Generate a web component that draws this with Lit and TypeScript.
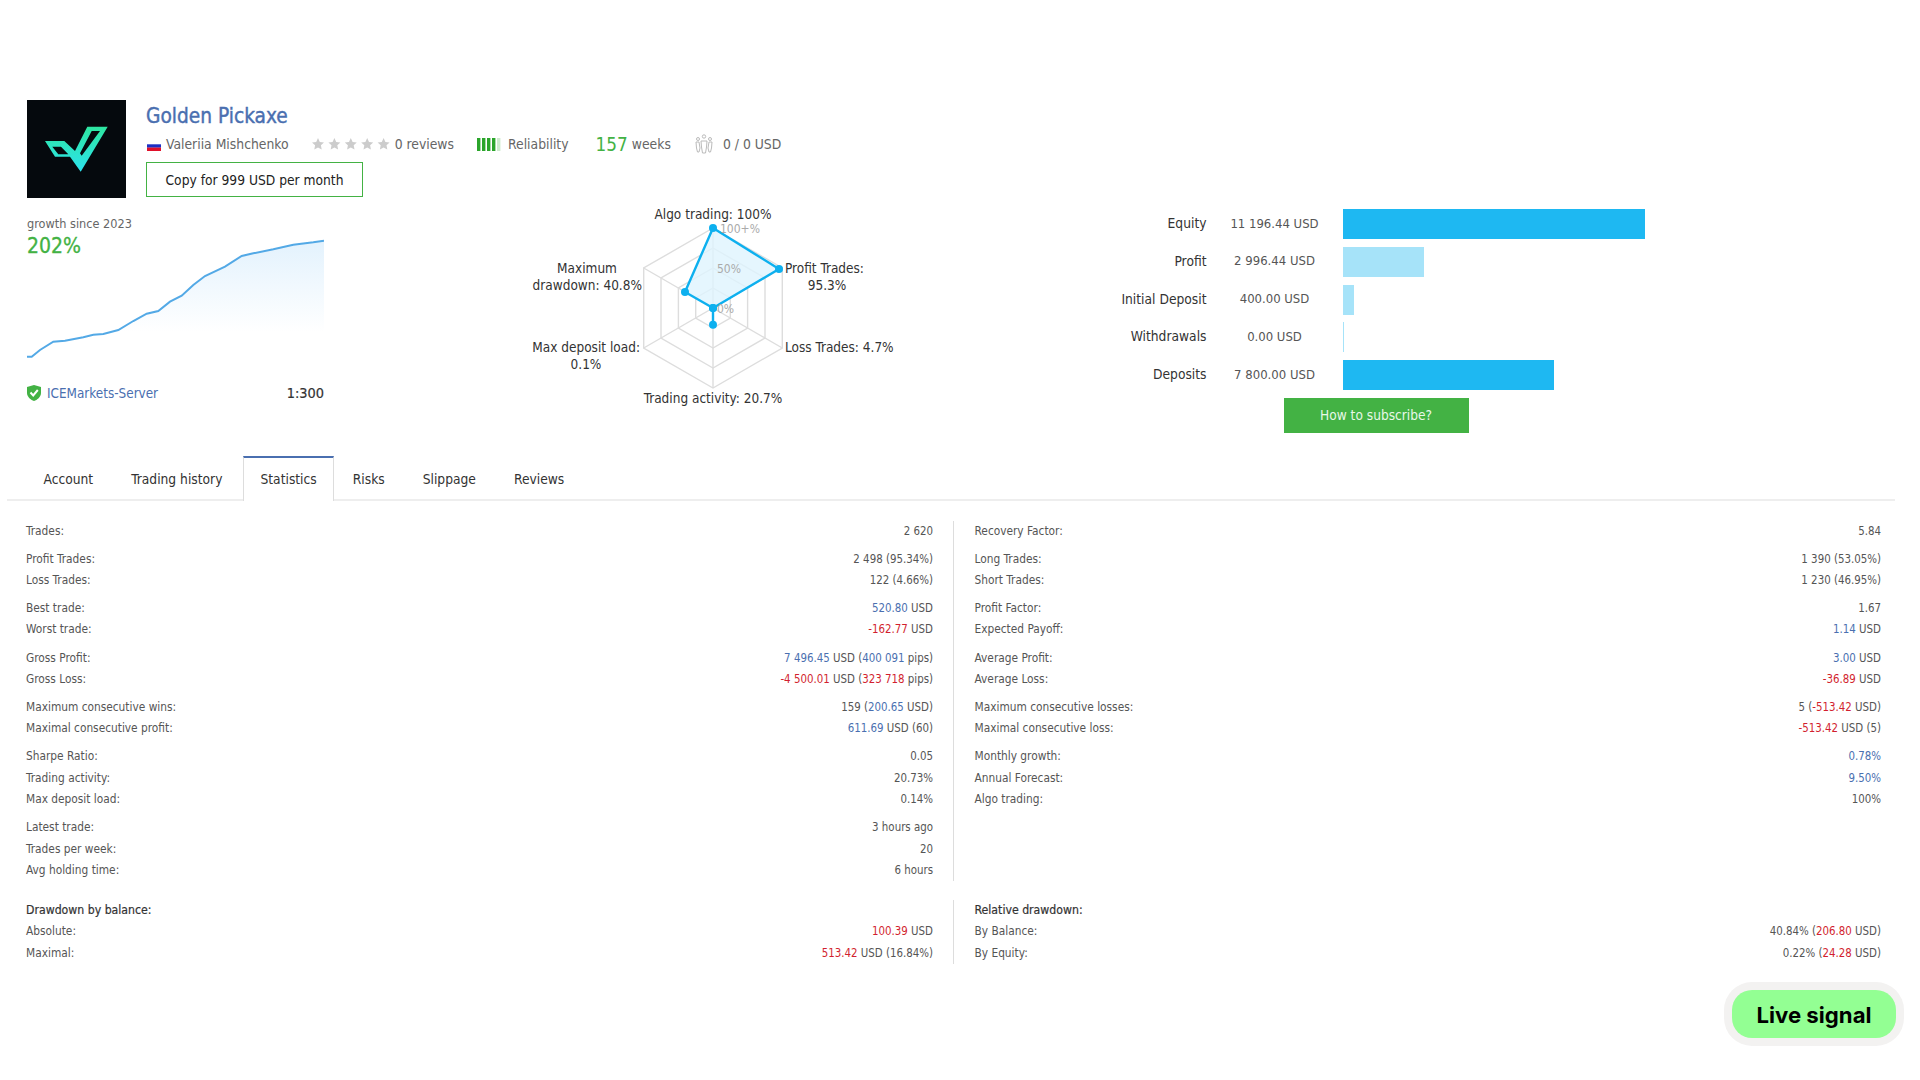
import { LitElement, html, css, svg } from 'lit';
import { customElement } from 'lit/decorators.js';

// [label, value html] rows, grouped the way the stats table spaces them
type Row = [string, unknown];
const blue = (s: string) => html`<span class="blue">${s}</span>`;
const red = (s: string) => html`<span class="red">${s}</span>`;

const leftGroups: Row[][] = [
  [['Trades:', '2 620']],
  [['Profit Trades:', '2 498 (95.34%)'], ['Loss Trades:', '122 (4.66%)']],
  [['Best trade:', html`${blue('520.80')} USD`], ['Worst trade:', html`${red('-162.77')} USD`]],
  [
    ['Gross Profit:', html`${blue('7 496.45')} USD (${blue('400 091')} pips)`],
    ['Gross Loss:', html`${red('-4 500.01')} USD (${red('323 718')} pips)`],
  ],
  [
    ['Maximum consecutive wins:', html`159 (${blue('200.65')} USD)`],
    ['Maximal consecutive profit:', html`${blue('611.69')} USD (60)`],
  ],
  [['Sharpe Ratio:', '0.05'], ['Trading activity:', '20.73%'], ['Max deposit load:', '0.14%']],
  [['Latest trade:', '3 hours ago'], ['Trades per week:', '20'], ['Avg holding time:', '6 hours']],
];

const rightGroups: Row[][] = [
  [['Recovery Factor:', '5.84']],
  [['Long Trades:', '1 390 (53.05%)'], ['Short Trades:', '1 230 (46.95%)']],
  [['Profit Factor:', '1.67'], ['Expected Payoff:', html`${blue('1.14')} USD`]],
  [['Average Profit:', html`${blue('3.00')} USD`], ['Average Loss:', html`${red('-36.89')} USD`]],
  [
    ['Maximum consecutive losses:', html`5 (${red('-513.42')} USD)`],
    ['Maximal consecutive loss:', html`${red('-513.42')} USD (5)`],
  ],
  [['Monthly growth:', blue('0.78%')], ['Annual Forecast:', blue('9.50%')], ['Algo trading:', '100%']],
];

const drawLeft: Row[] = [
  ['Absolute:', html`${red('100.39')} USD`],
  ['Maximal:', html`${red('513.42')} USD (16.84%)`],
];
const drawRight: Row[] = [
  ['By Balance:', html`40.84% (${red('206.80')} USD)`],
  ['By Equity:', html`0.22% (${red('24.28')} USD)`],
];

const funds = [
  { label: 'Equity', value: '11 196.44 USD', width: 302, light: false },
  { label: 'Profit', value: '2 996.44 USD', width: 81, light: true },
  { label: 'Initial Deposit', value: '400.00 USD', width: 11, light: true },
  { label: 'Withdrawals', value: '0.00 USD', width: 1, light: true },
  { label: 'Deposits', value: '7 800.00 USD', width: 211, light: false },
];

const tabs = ['Account', 'Trading history', 'Statistics', 'Risks', 'Slippage', 'Reviews'];

// radar chart, drawn around 0,0
const R = [20, 40, 60, 80];
const hex = (r: number) =>
  [0, 60, 120, 180, 240, 300]
    .map((a) => {
      const t = (a * Math.PI) / 180;
      return `${(r * Math.sin(t)).toFixed(1)},${(-r * Math.cos(t)).toFixed(1)}`;
    })
    .join(' ');
const dots = [
  [0, -80],
  [66, -39],
  [0, 0],
  [0, 16.7],
  [0, 0],
  [-28, -16],
];

const growthLine =
  '0,120.7 4.7,120.7 13,114 26.3,105.7 38,104.7 56.3,101.3 66.3,98.7 76.3,98 91.3,94 106.3,85 119.7,77.7 131.3,75 143,65.7 154.7,59.7 166.3,49 178,40 198,30.7 214.7,20 226.3,17.3 246.3,13.3 266.3,8.7 286.3,6.3 297,4.7';

@customElement('app-root')
export class AppRoot extends LitElement {
  static styles = css`
    :host {
      display: block;
      position: relative;
      width: 1920px;
      height: 1080px;
      background: #fff;
      overflow: hidden;
      font-family: 'DejaVu Sans Condensed', 'DejaVu Sans', sans-serif;
      font-size: 11.8px;
      color: #555;
    }
    .head {
      display: flex;
      gap: 20px;
      padding: 100px 0 0 27px;
    }
    .logo {
      display: block;
      width: 99px;
      height: 98px;
    }
    .title {
      margin-top: 4px;
      font-size: 20.7px;
      line-height: 24px;
      color: #4a6fb0;
      -webkit-text-stroke: 0.4px #4a6fb0;
    }
    .meta {
      display: flex;
      align-items: center;
      height: 20px;
      margin-top: 6px;
      font-size: 13.8px;
      color: #666;
    }
    .flag {
      display: block;
      width: 14px;
      height: 10px;
      margin: 3px 5px 0 1px;
    }
    .stars {
      display: block;
      margin: 0 5px 0 23px;
    }
    .rel {
      display: block;
      margin: 0 7px 0 23px;
    }
    .weeks {
      display: flex;
      align-items: center;
      margin-left: 27px;
    }
    .weeks b {
      font-weight: normal;
      font-size: 18.8px;
      color: #43b244;
      margin-right: 4px;
    }
    .people {
      display: block;
      margin: 0 9px 0 23px;
    }
    .copy {
      display: flex;
      align-items: center;
      justify-content: center;
      width: 217px;
      height: 35px;
      box-sizing: border-box;
      margin-top: 8px;
      border: 1px solid #43b244;
      font-size: 13.7px;
      color: #222;
    }
    .summary {
      display: flex;
      height: 225px;
      margin-top: 9px;
    }
    .growth {
      width: 297px;
      margin-left: 27px;
      flex: none;
    }
    .since {
      margin-top: 10px;
      font-size: 12.6px;
      line-height: 14px;
      color: #666;
    }
    .pct {
      margin-top: 3px;
      font-size: 21px;
      line-height: 24px;
      color: #43b244;
      -webkit-text-stroke: 0.3px #43b244;
    }
    .curve {
      display: block;
      margin-top: -22px;
    }
    .server {
      display: flex;
      align-items: center;
      margin-top: 24px;
      font-size: 13.4px;
      color: #4a6fb0;
    }
    .server svg {
      display: block;
      margin-right: 6px;
    }
    .server span {
      margin-left: auto;
      font-size: 14.4px;
      color: #333;
      -webkit-text-stroke: 0.2px #333;
    }
    .radar {
      display: block;
      flex: none;
      margin-left: 196px;
    }
    .radar text {
      font-size: 13.5px;
      fill: #333;
    }
    .radar .scale {
      font-size: 12px;
      fill: #aaa;
    }
    .funds {
      flex: none;
      margin-left: 179.5px;
      padding-top: 2px;
    }
    .fund {
      display: grid;
      grid-template-columns: 107px 136px 302px;
      align-items: center;
      height: 30px;
      margin-bottom: 7.75px;
      font-size: 13px;
    }
    .fund .name {
      text-align: right;
      margin-top: -2px;
      font-size: 13.7px;
      color: #333;
    }
    .fund .val {
      text-align: center;
      margin-top: -2px;
    }
    .bar {
      height: 30px;
      background: #1eb8f2;
    }
    .bar.light {
      background: #a6e3f9;
    }
    .how {
      display: flex;
      align-items: center;
      justify-content: center;
      width: 185px;
      height: 35px;
      margin: 0 0 0 184px;
      background: #43b244;
      color: #e8f8e8;
      font-size: 13.6px;
    }
    .tabs {
      display: flex;
      height: 43px;
      margin: 24px 25px 0 7px;
      padding-left: 17.5px;
      border-bottom: 2px solid #eee;
    }
    .tab {
      display: flex;
      align-items: center;
      padding: 0 19px;
      height: 43px;
      font-size: 13.7px;
      color: #333;
      border-top: 2px solid transparent;
      box-sizing: border-box;
    }
    .tab.on {
      height: 45px;
      margin-left: 2px;
      border-top: 2px solid #4a6fb0;
      border-left: 1px solid #ddd;
      border-right: 1px solid #ddd;
      background: #fff;
      padding: 0 16px 2px;
    }
    .cols {
      display: grid;
      grid-template-columns: 927px 928px;
      padding-left: 26px;
      margin-top: 19.5px;
    }
    .col + .col {
      padding-left: 20.5px;
      border-left: 1px solid #ddd;
      box-sizing: border-box;
    }
    .cols.low {
      margin-top: 18.5px;
    }
    .group {
      margin-bottom: 6.7px;
    }
    .group:last-child {
      margin-bottom: 0;
    }
    .row {
      display: flex;
      justify-content: space-between;
      height: 21.4px;
      line-height: 21.4px;
      padding-right: 20px;
    }
    .row .v {
      font-size: 11.4px;
    }
    .col + .col .row {
      padding-right: 0;
    }
    .caption {
      height: 21.4px;
      line-height: 21.4px;
      font-size: 12.2px;
      color: #333;
      -webkit-text-stroke: 0.2px #333;
    }
    .blue {
      color: #4a6fb0;
    }
    .red {
      color: #d21f2f;
    }
    .live {
      position: absolute;
      left: 1724px;
      top: 982px;
      width: 180px;
      height: 64px;
      box-sizing: border-box;
      padding: 8px;
      border-radius: 28px;
      background: #f3f2f1;
    }
    .live div {
      display: flex;
      align-items: center;
      justify-content: center;
      height: 48px;
      border-radius: 20px;
      background: #93ff93;
      font: 700 22.2px Inter, sans-serif;
      color: #000;
    }
  `;

  renderRows(rows: Row[]) {
    return rows.map(([k, v]) => html`<div class="row"><span>${k}</span><span class="v">${v}</span></div>`);
  }

  renderLogo() {
    return html`<svg class="logo" viewBox="0 0 99 98">
      <defs>
        <linearGradient id="lg" x1="0" y1="0" x2="0" y2="1">
          <stop offset="0" stop-color="#2ee6a0"></stop>
          <stop offset="1" stop-color="#2ce2ee"></stop>
        </linearGradient>
      </defs>
      <rect width="99" height="98" fill="#05090d"></rect>
      <path
        fill="url(#lg)"
        fill-rule="evenodd"
        d="M18 41H37.3L48 51 60.3 26.7H80.7L53.7 71.7 43 56.7H28ZM25.3 46.7L31.3 54.3H41.3L34 46.7ZM64.7 31L53 53.3 54.7 55.7 73 31Z"
      ></path>
    </svg>`;
  }

  renderStars() {
    const star = 'M6 0L7.8 3.9 12 4.4 8.9 7.3 9.7 11.5 6 9.4 2.3 11.5 3.1 7.3 0 4.4 4.2 3.9Z';
    return html`<svg class="stars" width="78" height="12" viewBox="0 0 78 12">
      ${[0, 1, 2, 3, 4].map(
        (i) => svg`<path d=${star} transform="translate(${i * 16.4} 0)" fill="#ccc"></path>`
      )}
    </svg>`;
  }

  renderReliability() {
    return html`<svg class="rel" width="24" height="13" viewBox="0 0 24 13">
      ${[0, 5, 10, 15].map((x) => svg`<rect x=${x} width="3.4" height="13" fill="#2ba52b"></rect>`)}
      <rect x="20" width="3.4" height="13" fill="#cdeacd"></rect>
    </svg>`;
  }

  renderPeople() {
    return html`<svg class="people" width="20" height="20" viewBox="0 0 20 20" fill="none" stroke="#bbb" stroke-width="1">
      <circle cx="10" cy="2.5" r="1.7"></circle>
      <circle cx="4" cy="5" r="1.5"></circle>
      <circle cx="16" cy="5" r="1.5"></circle>
      <path d="M7 7h6l-.5 6-1 6h-3l-1-6zM2 8h3l1 6-1 4H3.5L2.5 14zM18 8h-3l-1 6 1 4h1.5l1-4z"></path>
    </svg>`;
  }

  renderRadar() {
    return html`<svg class="radar" width="400" height="225" viewBox="0 0 400 225">
      <g transform="translate(193 101)">
        ${R.map((r) => svg`<polygon points=${hex(r)} fill="none" stroke="#ddd" stroke-width="1.4"></polygon>`)}
        ${[0, 60, 120].map((a) => {
          const t = (a * Math.PI) / 180;
          const x = 80 * Math.sin(t);
          const y = 80 * Math.cos(t);
          return svg`<line x1=${x} y1=${-y} x2=${-x} y2=${y} stroke="#ddd" stroke-width="1.4"></line>`;
        })}
        <polygon
          points=${dots.map((d) => d.join(',')).join(' ')}
          fill="#dff4fe"
          fill-opacity="0.8"
          stroke="#0db0ef"
          stroke-width="2.4"
          stroke-linejoin="round"
        ></polygon>
        ${dots.map(([x, y]) => svg`<circle cx=${x} cy=${y} r="4" fill="#0db0ef"></circle>`)}
        <text class="scale" x="7" y="-75">100+%</text>
        <text class="scale" x="4" y="-35">50%</text>
        <text class="scale" x="4" y="5">0%</text>
      </g>
      <text x="193" y="12" text-anchor="middle">Algo trading: 100%</text>
      <text x="265" y="66">Profit Trades:</text>
      <text x="307" y="83" text-anchor="middle">95.3%</text>
      <text x="67" y="66" text-anchor="middle">Maximum</text>
      <text x="122" y="83" text-anchor="end">drawdown: 40.8%</text>
      <text x="120" y="145" text-anchor="end">Max deposit load:</text>
      <text x="66" y="162" text-anchor="middle">0.1%</text>
      <text x="265" y="145">Loss Trades: 4.7%</text>
      <text x="193" y="196" text-anchor="middle">Trading activity: 20.7%</text>
    </svg>`;
  }

  render() {
    return html`
      <div class="head">
        ${this.renderLogo()}
        <div>
          <div class="title">Golden Pickaxe</div>
          <div class="meta">
            <svg class="flag" viewBox="0 0 14 10">
              <rect width="14" height="3.4" fill="#fff"></rect>
              <rect y="3.3" width="14" height="3.4" fill="#1c2fc4"></rect>
              <rect y="6.6" width="14" height="3.4" fill="#e0102a"></rect>
            </svg>
            Valeriia Mishchenko ${this.renderStars()} 0 reviews ${this.renderReliability()} Reliability
            <span class="weeks"><b>157</b>weeks</span>
            ${this.renderPeople()} 0 / 0 USD
          </div>
          <div class="copy">Copy for 999 USD per month</div>
        </div>
      </div>

      <div class="summary">
        <div class="growth">
          <div class="since">growth since 2023</div>
          <div class="pct">202%</div>
          <svg class="curve" width="297" height="125" viewBox="0 0 297 125">
            <defs>
              <linearGradient id="area" x1="0" y1="0" x2="0" y2="1">
                <stop offset="0" stop-color="#e3f2fd"></stop>
                <stop offset="0.78" stop-color="#fff"></stop>
              </linearGradient>
            </defs>
            <polygon points="${growthLine} 297,122 0,122" fill="url(#area)"></polygon>
            <polyline points=${growthLine} fill="none" stroke="#53a9e6" stroke-width="2"></polyline>
          </svg>
          <div class="server">
            <svg width="14" height="16" viewBox="0 0 14 16">
              <path d="M7 0L14 2V8C14 12 10 15 7 16 4 15 0 12 0 8V2Z" fill="#43b244"></path>
              <path d="M3.5 7.5L6.2 10.4 10.8 5" fill="none" stroke="#fff" stroke-width="2"></path>
            </svg>
            ICEMarkets-Server
            <span>1:300</span>
          </div>
        </div>
        ${this.renderRadar()}
        <div class="funds">
          ${funds.map(
            (f) => html`<div class="fund">
              <div class="name">${f.label}</div>
              <div class="val">${f.value}</div>
              <div class="bar ${f.light ? 'light' : ''}" style="width: ${f.width}px"></div>
            </div>`
          )}
          <div class="how">How to subscribe?</div>
        </div>
      </div>

      <div class="tabs">
        ${tabs.map((t) => html`<div class="tab ${t === 'Statistics' ? 'on' : ''}">${t}</div>`)}
      </div>

      <div class="cols">
        <div class="col">
          ${leftGroups.map((g) => html`<div class="group">${this.renderRows(g)}</div>`)}
        </div>
        <div class="col">
          ${rightGroups.map((g) => html`<div class="group">${this.renderRows(g)}</div>`)}
        </div>
      </div>
      <div class="cols low">
        <div class="col">
          <div class="caption">Drawdown by balance:</div>
          ${this.renderRows(drawLeft)}
        </div>
        <div class="col">
          <div class="caption">Relative drawdown:</div>
          ${this.renderRows(drawRight)}
        </div>
      </div>

      <div class="live"><div>Live signal</div></div>
    `;
  }
}
